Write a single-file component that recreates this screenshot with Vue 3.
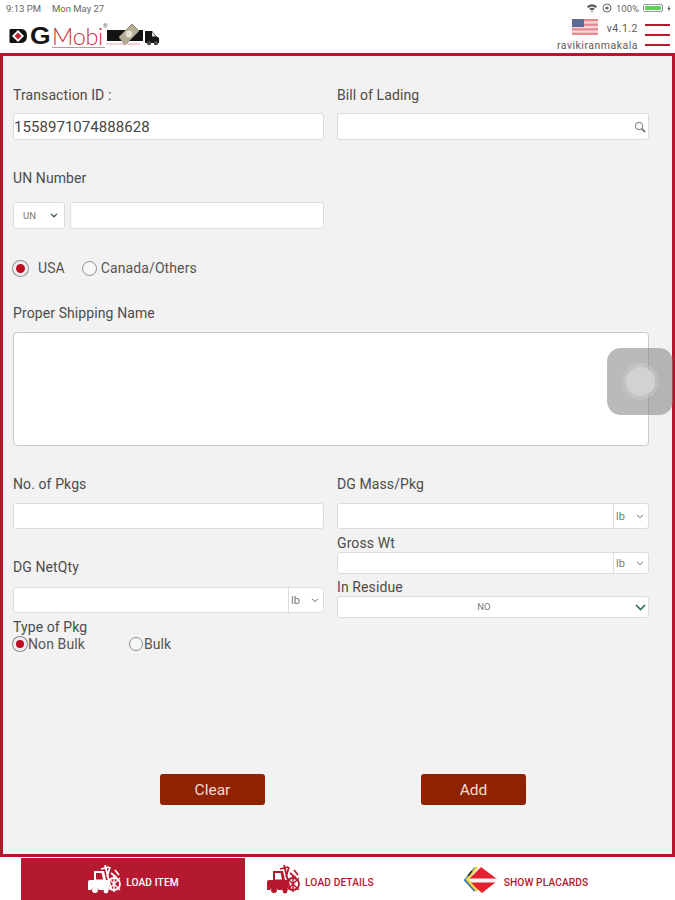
<template>
  <div class="page">
    <!-- status bar -->
    <div class="status">
      <span>9:13 PM</span>
      <span class="date">Mon May 27</span>
      <span class="status-right">
        <svg width="12" height="10" viewBox="0 0 12 10"><path d="M1 3.5 Q6 -1 11 3.5 L9.6 5 Q6 2 2.4 5Z M3.3 5.8 Q6 3.6 8.7 5.8 L7.4 7.2 Q6 6.2 4.6 7.2Z M5 8 Q6 7.4 7 8 L6 9.2Z" fill="#555" /></svg>
        <svg width="10" height="10" viewBox="0 0 10 10"><circle cx="5" cy="5" r="4" fill="none" stroke="#666" /><circle cx="5" cy="5" r="1.6" fill="#666" /></svg>
        <span>100%</span>
        <span class="battery"><i></i></span>
        <svg width="4" height="7" viewBox="0 0 4 7"><path d="M2.4 0 L0.4 4 H1.8 L1.4 7 L3.6 3 H2.2Z" fill="#555" /></svg>
      </span>
    </div>

    <!-- header -->
    <header class="header">
      <div class="logo">
        <svg class="logo-d" width="19" height="16" viewBox="0 0 19 16">
          <path d="M1.5 1 H12 Q18 1 18 8 Q18 15 12 15 H1.5 Q0.5 15 0.5 14 V2 Q0.5 1 1.5 1Z" fill="#111" />
          <path d="M9 2 L15 8 L9 14 L3 8Z" fill="#fff" />
          <path d="M9 4.5 L12.5 8 L9 11.5 L5.5 8Z" fill="#c8202f" />
        </svg>
        <span class="logo-g">G</span>
        <span class="logo-mobi">Mobi</span>
        <sup class="logo-r">®</sup>
        <svg class="logo-truck" width="54" height="26" viewBox="0 0 54 26">
          <path d="M1 7 H37 V18 H1Z" fill="#141414" />
          <path d="M39 8 H46 L50 13 L53 15 V20 H39Z" fill="#141414" />
          <path d="M46 9.5 H47 L49.5 13.5 H46Z" fill="#ddd" />
          <circle cx="43" cy="20" r="2.2" fill="#444" />
          <circle cx="50" cy="20" r="2.2" fill="#444" />
          <path d="M13 14 L26 1 L33 8 L19 22 Z" fill="#b4ad96" stroke="#8a8672" />
          <circle cx="23" cy="11" r="3.4" fill="#e6e2d2" />
          <path d="M0 21 H34" stroke="#e3a8a8" stroke-width="1" />
        </svg>
      </div>
      <div class="account">
        <div class="account-top">
          <svg class="flag" width="26" height="16" viewBox="0 0 26 16">
            <rect width="26" height="16" fill="#f6d8da" />
            <rect y="0" width="26" height="2.3" fill="#e58a90" />
            <rect y="4.6" width="26" height="2.3" fill="#e58a90" />
            <rect y="9.2" width="26" height="2.3" fill="#e58a90" />
            <rect y="13.7" width="26" height="2.3" fill="#e58a90" />
            <rect width="12" height="8" fill="#5d6a94" />
          </svg>
          <span class="version">v4.1.2</span>
        </div>
        <div class="username">ravikiranmakala</div>
      </div>
      <div class="menu"><i></i><i></i><i></i></div>
    </header>

    <!-- form -->
    <main class="main">
      <div class="two-col">
        <div>
          <div class="label label-tid">Transaction ID :</div>
          <input class="field field-tid" value="1558971074888628" />
        </div>
        <div>
          <div class="label label-tid">Bill of Lading</div>
          <div class="field search">
            <svg width="12" height="12" viewBox="0 0 12 12"><circle cx="5" cy="5" r="3.6" fill="none" stroke="#8b9396" stroke-width="1.2" /><path d="M7.8 7.8 L11 11" stroke="#4f5a60" stroke-width="1.6" /></svg>
          </div>
        </div>
      </div>

      <div class="label label-un">UN Number</div>
      <div class="un-row">
        <div class="field select un-select">
          <span>UN</span>
          <svg class="chev" width="8" height="5" viewBox="0 0 9 6"><path d="M1 1 L4.5 4.5 L8 1" fill="none" stroke="#35575c" stroke-width="1.5" /></svg>
        </div>
        <input class="field un-input" />
      </div>

      <div class="radio-row">
        <span class="radio on"></span>
        <span class="radio-text usa">USA</span>
        <span class="radio"></span>
        <span class="radio-text">Canada/Others</span>
      </div>

      <div class="label label-psn">Proper Shipping Name</div>
      <textarea class="field shipping"></textarea>

      <div class="two-col lower">
        <div>
          <div class="label gap-11">No. of Pkgs</div>
          <input class="field tall" />
          <div class="label net-label">DG NetQty</div>
          <div class="field tall unit-field">
            <span class="unit-fill"></span>
            <div class="unit">
              <span>lb</span>
              <svg class="chev" width="8" height="5" viewBox="0 0 9 6"><path d="M1 1 L4.5 4.5 L8 1" fill="none" stroke="#666" stroke-width="1.2" /></svg>
            </div>
          </div>
          <div class="label type-label">Type of Pkg</div>
          <div class="pkg-row">
            <span class="radio on"></span>
            <span class="pkg-text non-bulk">Non Bulk</span>
            <span class="radio"></span>
            <span class="pkg-text">Bulk</span>
          </div>
        </div>
        <div>
          <div class="label gap-11">DG Mass/Pkg</div>
          <div class="field tall unit-field">
            <span class="unit-fill"></span>
            <div class="unit">
              <span>lb</span>
              <svg class="chev" width="8" height="5" viewBox="0 0 9 6"><path d="M1 1 L4.5 4.5 L8 1" fill="none" stroke="#666" stroke-width="1.2" /></svg>
            </div>
          </div>
          <div class="label gross-label">Gross Wt</div>
          <div class="field short unit-field">
            <span class="unit-fill"></span>
            <div class="unit">
              <span>lb</span>
              <svg class="chev" width="8" height="5" viewBox="0 0 9 6"><path d="M1 1 L4.5 4.5 L8 1" fill="none" stroke="#666" stroke-width="1.2" /></svg>
            </div>
          </div>
          <div class="label residue-label">In Residue</div>
          <div class="field short select residue">
            <span>NO</span>
            <svg class="chev" width="11" height="7" viewBox="0 0 11 7"><path d="M1 1 L5.5 5.5 L10 1" fill="none" stroke="#35705f" stroke-width="1.7" /></svg>
          </div>
        </div>
      </div>

      <div class="actions">
        <button>Clear</button>
        <button>Add</button>
      </div>
    </main>

    <!-- bottom tabs -->
    <nav class="tabs">
      <div v-for="tab in tabs" :key="tab.label" class="tab" :class="tab.cls">
        <svg v-if="tab.icon === 'fork'" width="34" height="29" viewBox="0 0 34 29">
          <path fill="currentColor" d="M7 6 H17 L19 15 H21 V25 H12 A4.5 4.5 0 0 0 4 25 H1 V17 Q1 15 3 15 H7Z M9 8 V14.5 H16 L14.6 8Z" />
          <circle cx="8" cy="25" r="3" fill="currentColor" />
          <circle cx="19" cy="26" r="2.4" fill="currentColor" />
          <path d="M18 0 L24 24 M14 4 L22 2 M23 2 L20 12" stroke="currentColor" stroke-width="1.8" fill="none" />
          <circle cx="27" cy="19" r="6" fill="none" stroke="currentColor" stroke-width="1.8" />
          <path d="M21 13 L33 25 M33 13 L21 25 M27 11 V27" stroke="currentColor" stroke-width="1.4" fill="none" />
          <path d="M24 8 L30 13 M28 5 L32 10" stroke="currentColor" stroke-width="1.8" fill="none" />
        </svg>
        <svg v-else width="33" height="27" viewBox="0 0 33 27">
          <path d="M17 1 L33 13 H5Z" fill="#e4222f" />
          <path d="M5 16 H32 L18 27Z" fill="#e4222f" />
          <rect x="6" y="12.5" width="26" height="4" fill="#f3f3f3" />
          <path d="M11 2 L1 14 L11 25" fill="none" stroke="#2b6fb3" stroke-width="2" />
          <path d="M13 1 L3 13.5 L13 25" fill="none" stroke="#f1d43c" stroke-width="2.4" />
          <path d="M8 5 L4 10" stroke="#222" stroke-width="1.4" />
        </svg>
        <span class="tab-text">{{ tab.label }}</span>
      </div>
    </nav>

    <!-- assistive touch overlay -->
    <div class="touch"><span></span></div>
  </div>
</template>

<script setup>
const tabs = [
  { label: 'LOAD ITEM', icon: 'fork', cls: 'active' },
  { label: 'LOAD DETAILS', icon: 'fork', cls: 'details' },
  { label: 'SHOW PLACARDS', icon: 'placard', cls: 'placards' }
]
</script>

<style>
html, body { margin: 0; background: #fff; }
</style>

<style scoped>
.page {
  position: relative;
  width: 675px;
  height: 900px;
  display: flex;
  flex-direction: column;
  overflow: hidden;
  font-family: Roboto, "Liberation Sans", sans-serif;
  color: #4a4a4a;
}

/* status bar */
.status {
  height: 16px;
  display: flex;
  align-items: center;
  padding: 0 4px 0 6px;
  font-size: 9.5px;
  color: #666;
}
.date { margin-left: 11px; }
.status-right {
  margin-left: auto;
  display: flex;
  align-items: center;
  gap: 4px;
}
.battery {
  width: 20px;
  height: 8px;
  border: 1px solid #999;
  border-radius: 2px;
  padding: 1px;
  box-sizing: border-box;
  display: flex;
}
.battery i { flex: 1; background: #5ed05c; border-radius: 1px; }

/* header */
.header {
  height: 37px;
  display: flex;
  box-sizing: border-box;
}
.logo {
  display: flex;
  align-items: center;
  height: 24px;
  margin: 8px 0 0 9px;
}
.logo-g {
  margin-left: 2px;
  width: 22px;
  font: bold 23px "Liberation Sans", sans-serif;
  color: #151515;
  transform: scaleX(1.15);
  transform-origin: left;
}
.logo-mobi {
  position: relative;
  font-family: Lato, sans-serif;
  font-weight: 300;
  font-size: 23.5px;
  line-height: 24px;
  color: #c9303c;
  letter-spacing: -0.3px;
}
.logo-mobi::after {
  content: "";
  position: absolute;
  left: 0;
  right: -2px;
  bottom: 0;
  height: 1px;
  background: #e08a90;
}
.logo-r { font-size: 6px; align-self: flex-start; margin: -2px 0 0; color: #555; line-height: 8px; }
.logo-truck { margin-left: -2px; }
.account {
  margin-left: auto;
  display: flex;
  flex-direction: column;
  align-items: flex-end;
  font-size: 10.5px;
  color: #5a5a5a;
}
.account-top { display: flex; align-items: center; margin-top: 3px; height: 16px; }
.version { margin-left: 9px; letter-spacing: 0.5px; position: relative; top: 1px; }
.username { margin-top: 4px; line-height: 14px; letter-spacing: 0.5px; }
.menu {
  width: 25px;
  margin: 8px 5px 0 7px;
  display: flex;
  flex-direction: column;
  gap: 8px;
}
.menu i { height: 2px; background: #b9192e; }

/* form */
.main {
  flex: 1;
  display: flex;
  flex-direction: column;
  background: #f2f2f2;
  border: 3px solid #b5172d;
  padding: 31px 23px 49px 10px;
  margin-top: 0;
}
.two-col {
  display: grid;
  grid-template-columns: 311px 312px;
  column-gap: 13px;
}
.label { font-size: 14px; line-height: 16px; letter-spacing: 0.1px; color: #4c4c4c; }
.label-tid { margin-bottom: 10px; }
.label-un { margin: 30px 0 16px; }
.label-psn { margin: 27px 0 11px; }
.gap-11 { margin-bottom: 11px; }
.net-label { margin: 30px 0 12px; }
.type-label { margin-top: 6px; }
.gross-label { margin: 6px 0 1px; }
.residue-label { margin: 5px 0 1px; }

.field {
  display: block;
  width: 100%;
  box-sizing: border-box;
  background: #fff;
  border: 1px solid #dcdcdc;
  border-radius: 3px;
  padding: 0;
  margin: 0;
  outline: none;
  font-family: inherit;
  color: #444;
}
.field-tid {
  height: 27px;
  font-size: 15px;
  letter-spacing: 0.05px;
}
.search {
  height: 27px;
  display: flex;
  align-items: center;
  justify-content: flex-end;
  padding-right: 2px;
}
.un-row { display: flex; gap: 5px; width: 311px; }
.un-select {
  width: 52px;
  flex: none;
  height: 27px;
}
.un-input { flex: 1; min-width: 0; height: 27px; }
.select {
  display: flex;
  align-items: center;
  font-size: 9.5px;
  color: #777;
  padding: 0 6px 0 9px;
  justify-content: space-between;
}
.radio-row {
  display: flex;
  align-items: center;
  height: 20px;
  margin-top: 29px;
  font-size: 14px;
  letter-spacing: 0.1px;
  color: #555;
}
.radio {
  flex: none;
  width: 15px;
  height: 15px;
  box-sizing: border-box;
  border: 1px solid #7f929b;
  border-radius: 50%;
  background: #f7f7f7;
}
.radio.on {
  background: #c10c24;
  border: 3px solid #eee;
  box-shadow: 0 0 0 1px #8e8e92;
}
.radio-text { margin-left: 4px; }
.usa { margin: 0 17px 0 10px; }
.shipping {
  height: 114px;
  resize: none;
  border-color: #c9c9c9;
  border-radius: 4px;
}
.lower { margin-top: 30px; }
.tall { height: 26px; }
.short { height: 22px; }
.unit-field { display: flex; }
.unit-fill { flex: 1; }
.unit {
  flex: none;
  width: 35px;
  border-left: 1px solid #dedede;
  display: flex;
  align-items: center;
  justify-content: space-between;
  padding: 0 4px 0 2px;
  box-sizing: border-box;
  font-size: 11px;
  color: #777;
}
.residue { justify-content: center; position: relative; padding: 0 18px 2px 0; }
.residue .chev { position: absolute; right: 2px; top: 7px; }
.pkg-row {
  display: flex;
  align-items: center;
  height: 18px;
  font-size: 14px;
  letter-spacing: 0.1px;
  color: #555;
}
.pkg-row .radio { width: 14px; height: 14px; }
.pkg-text { margin-left: 1px; }
.non-bulk { margin-right: 44px; }

.actions {
  margin-top: auto;
  display: flex;
  gap: 156px;
  padding-left: 147px;
}
.actions button {
  width: 105px;
  height: 31px;
  background: #8f2200;
  color: #f0dcd6;
  border: none;
  border-radius: 3px;
  font-family: inherit;
  font-size: 15.5px;
}

/* tabs */
.tabs {
  height: 43px;
  flex: none;
  display: flex;
  padding-left: 21px;
}
.tab {
  display: flex;
  align-items: center;
  justify-content: center;
  gap: 5px;
  color: #b5172d;
  padding-top: 1px;
  box-sizing: border-box;
}
.tab.active { width: 224px; background: #b5192f; color: #fff; margin-top: 1px; padding-top: 1px; }
.tab.details { width: 150px; }
.tab.placards { width: 262px; gap: 7px; }
.tab-text { font-size: 10.2px; font-weight: 500; letter-spacing: 0.1px; position: relative; top: 3px; }

/* overlay */
.touch {
  position: absolute;
  left: 607px;
  top: 348px;
  width: 66px;
  height: 67px;
  border-radius: 14px;
  background: rgba(130, 130, 130, 0.55);
  display: flex;
  align-items: center;
  justify-content: center;
}
.touch span {
  width: 29px;
  height: 29px;
  border-radius: 50%;
  background: #d2d2d2;
  box-shadow: 0 0 0 4px rgba(210, 210, 210, 0.35);
}
</style>
